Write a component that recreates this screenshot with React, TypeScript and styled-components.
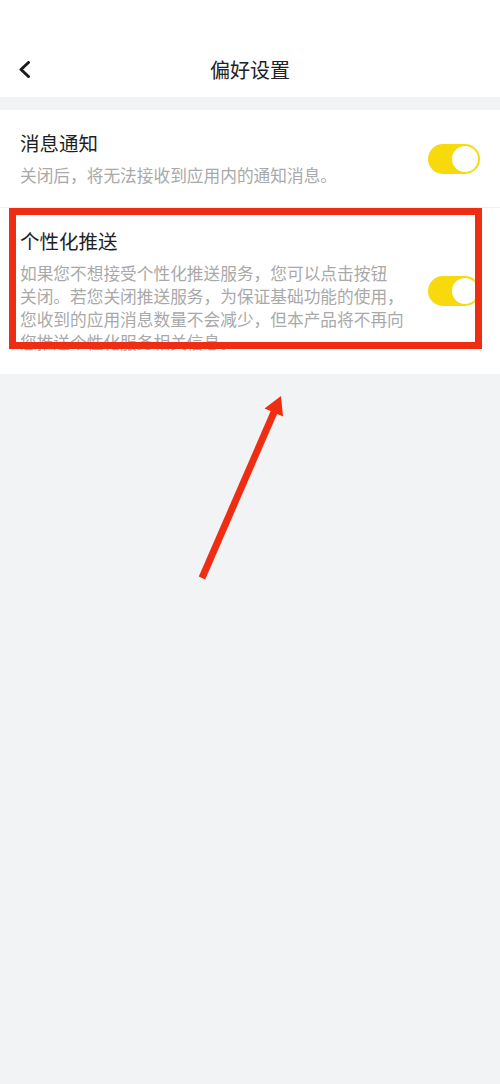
import React, { useState } from 'react';
import styled, { createGlobalStyle } from 'styled-components';

const GlobalStyle = createGlobalStyle`
  html, body {
    margin: 0;
    padding: 0;
    background: #f2f3f5;
  }
  body {
    font-family: "Noto Sans CJK SC", "Noto Sans", sans-serif;
  }
`;

const Page = styled.div`
  position: relative;
  width: 500px;
  min-height: 1084px;
  background: #f2f3f5;
  overflow: hidden;
`;

const Header = styled.header`
  background: #ffffff;
  padding-top: 42px;
`;

const NavBar = styled.div`
  height: 55px;
  display: grid;
  grid-template-columns: 60px 1fr 60px;
  align-items: center;
`;

const BackButton = styled.button`
  border: none;
  background: none;
  padding: 0 0 0 18px;
  display: flex;
  align-items: center;
  height: 100%;
  cursor: pointer;
`;

const Title = styled.h1`
  margin: 0;
  text-align: center;
  font-size: 20px;
  font-weight: 400;
  color: #222222;
`;

const List = styled.section`
  margin-top: 13px;
  background: #ffffff;
`;

const Row = styled.div<{ $divider?: boolean }>`
  display: flex;
  align-items: center;
  gap: 16px;
  padding: 20px;
  border-top: ${p => (p.$divider ? '1px solid #f0f0f0' : 'none')};
`;

const Texts = styled.div`
  flex: 1;
  display: flex;
  flex-direction: column;
  gap: 8px;
`;

const RowTitle = styled.div`
  font-size: 19.5px;
  line-height: 26px;
  color: #1f1f1f;
`;

const RowDesc = styled.div`
  font-size: 16.7px;
  line-height: 23px;
  color: #a9a9a9;
`;

const Track = styled.button<{ $on: boolean }>`
  flex: none;
  width: 52px;
  height: 30px;
  border-radius: 15px;
  border: none;
  padding: 2px;
  background: ${p => (p.$on ? '#f7d90c' : '#e2e2e2')};
  display: flex;
  justify-content: ${p => (p.$on ? 'flex-end' : 'flex-start')};
  cursor: pointer;
`;

const Knob = styled.span`
  width: 26px;
  height: 26px;
  border-radius: 50%;
  background: #ffffff;
`;

const Highlight = styled.div`
  position: absolute;
  left: 9px;
  top: 208px;
  width: 473px;
  height: 141px;
  box-sizing: border-box;
  border: 7px solid #ef2d13;
  pointer-events: none;
`;

const ArrowLayer = styled.svg`
  position: absolute;
  left: 0;
  top: 0;
  pointer-events: none;
`;

const Switch = ({ defaultOn }: { defaultOn: boolean }) => {
  const [on, setOn] = useState(defaultOn);
  return (
    <Track $on={on} onClick={() => setOn(!on)} aria-pressed={on}>
      <Knob />
    </Track>
  );
};

const App = () => (
  <Page>
    <GlobalStyle />
    <Header>
      <NavBar>
        <BackButton aria-label="返回">
          <svg width="13" height="17" viewBox="0 0 13 17">
            <polyline
              points="10.5,1.5 3,8.5 10.5,15.5"
              fill="none"
              stroke="#1a1a1a"
              strokeWidth="3"
              strokeLinecap="round"
              strokeLinejoin="round"
            />
          </svg>
        </BackButton>
        <Title>偏好设置</Title>
        <span />
      </NavBar>
    </Header>

    <List>
      <Row>
        <Texts>
          <RowTitle>消息通知</RowTitle>
          <RowDesc>关闭后，将无法接收到应用内的通知消息。</RowDesc>
        </Texts>
        <Switch defaultOn />
      </Row>
      <Row $divider>
        <Texts>
          <RowTitle>个性化推送</RowTitle>
          <RowDesc>
            如果您不想接受个性化推送服务，您可以点击按钮
            <br />
            关闭。若您关闭推送服务，为保证基础功能的使用，
            <br />
            您收到的应用消息数量不会减少，但本产品将不再向
            <br />
            您推送个性化服务相关信息。
          </RowDesc>
        </Texts>
        <Switch defaultOn />
      </Row>
    </List>

    <Highlight />
    <ArrowLayer width="500" height="1084" viewBox="0 0 500 1084">
      <line x1="202" y1="578" x2="275" y2="410" stroke="#ef2d13" strokeWidth="7" />
      <polygon points="281,396 264.5,408.5 283,416.5" fill="#ef2d13" />
    </ArrowLayer>
  </Page>
);

export default App;
